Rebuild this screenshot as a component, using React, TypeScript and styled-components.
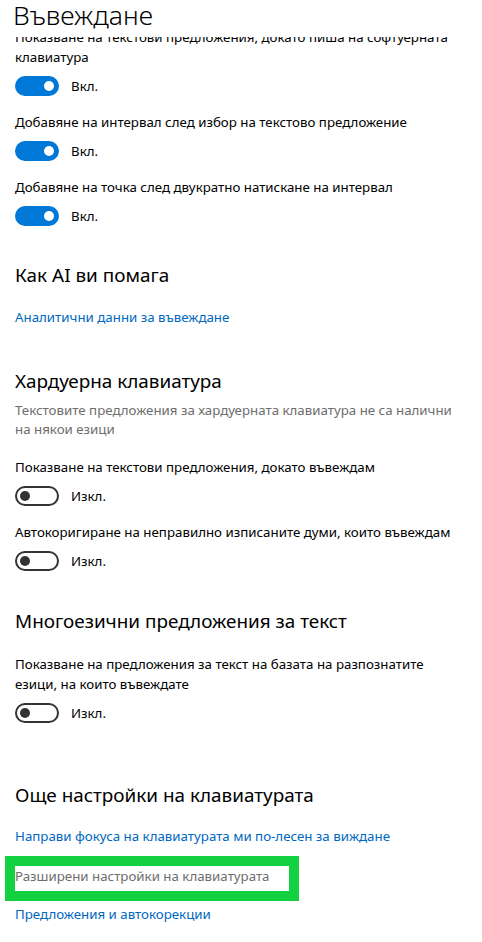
import React from "react";
import styled, { createGlobalStyle } from "styled-components";

const GlobalStyle = createGlobalStyle`
  html, body {
    margin: 0;
    padding: 0;
    background: #ffffff;
  }
  body {
    font-family: "Noto Sans", "Liberation Sans", sans-serif;
    color: #000000;
    -webkit-font-smoothing: antialiased;
  }
`;

const Page = styled.div`
  width: 482px;
  height: 942px;
  overflow: hidden;
  background: #ffffff;
  display: flex;
  flex-direction: column;
`;

const Header = styled.header`
  position: relative;
  z-index: 1;
  box-sizing: border-box;
  height: 37px;
  flex: 0 0 37px;
  background: #ffffff;
  padding: 3px 0 0 13px;
`;

const Title = styled.h1`
  margin: 0;
  font-size: 26.5px;
  line-height: 24px;
  font-weight: 300;
  color: #000000;
`;

const Content = styled.main`
  margin-top: -10px;
  padding: 0 15px;
  display: flex;
  flex-direction: column;
`;

const Section = styled.section<{ $top: number }>`
  margin-top: ${(p) => p.$top}px;
  display: flex;
  flex-direction: column;
`;

const Heading = styled.h2`
  margin: 0;
  font-size: 18.9px;
  line-height: 28px;
  font-weight: 400;
  color: #000000;
`;

const Description = styled.p`
  margin: 6px 0 0;
  font-size: 13.3px;
  line-height: 19px;
  color: #6d6d6d;
  white-space: nowrap;
`;

const Setting = styled.div<{ $top: number }>`
  margin-top: ${(p) => p.$top}px;
  display: flex;
  flex-direction: column;
`;

const Label = styled.div`
  font-size: 13.3px;
  line-height: 20px;
  white-space: nowrap;
`;

const ToggleRow = styled.div`
  margin-top: 9px;
  display: flex;
  align-items: center;
  gap: 12px;
  height: 20px;
`;

const Track = styled.span<{ $on: boolean }>`
  box-sizing: border-box;
  width: 44px;
  height: 20px;
  border-radius: 10px;
  display: flex;
  align-items: center;
  justify-content: ${(p) => (p.$on ? "flex-end" : "flex-start")};
  padding: 0 ${(p) => (p.$on ? "5px" : "3px")};
  background: ${(p) => (p.$on ? "#0078d7" : "transparent")};
  border: ${(p) => (p.$on ? "none" : "2px solid #333333")};
`;

const Knob = styled.span<{ $on: boolean }>`
  width: 10px;
  height: 10px;
  border-radius: 50%;
  background: ${(p) => (p.$on ? "#ffffff" : "#333333")};
`;

const State = styled.span`
  font-size: 13.3px;
  line-height: 20px;
`;

const Link = styled.a<{ $top: number; $muted?: boolean }>`
  margin-top: ${(p) => p.$top}px;
  display: block;
  font-size: 13.3px;
  line-height: 20px;
  color: ${(p) => (p.$muted ? "#6d6d6d" : "#0067c0")};
  text-decoration: none;
  white-space: nowrap;
`;

const Highlight = styled.div<{ $top: number }>`
  margin-top: ${(p) => p.$top}px;
  width: 274px;
  height: 25px;
  outline: 10px solid #13d141;
`;

function Toggle({ on }: { on: boolean }) {
  return (
    <ToggleRow>
      <Track $on={on}>
        <Knob $on={on} />
      </Track>
      <State>{on ? "Вкл." : "Изкл."}</State>
    </ToggleRow>
  );
}

export default function App() {
  return (
    <Page>
      <GlobalStyle />
      <Header>
        <Title>Въвеждане</Title>
      </Header>
      <Content>
        <Setting $top={0}>
          <Label>
            Показване на текстови предложения, докато пиша на софтуерната
            <br />
            клавиатура
          </Label>
          <Toggle on />
        </Setting>
        <Setting $top={16}>
          <Label>Добавяне на интервал след избор на текстово предложение</Label>
          <Toggle on />
        </Setting>
        <Setting $top={16}>
          <Label>Добавяне на точка след двукратно натискане на интервал</Label>
          <Toggle on />
        </Setting>

        <Section $top={35}>
          <Heading>Как AI ви помага</Heading>
          <Link href="#" $top={18}>
            Аналитични данни за въвеждане
          </Link>
        </Section>

        <Section $top={40}>
          <Heading>Хардуерна клавиатура</Heading>
          <Description>
            Текстовите предложения за хардуерната клавиатура не са налични
            <br />
            на някои езици
          </Description>
          <Setting $top={18}>
            <Label>Показване на текстови предложения, докато въвеждам</Label>
            <Toggle on={false} />
          </Setting>
          <Setting $top={16}>
            <Label>Автокоригиране на неправилно изписаните думи, които въвеждам</Label>
            <Toggle on={false} />
          </Setting>
        </Section>

        <Section $top={36}>
          <Heading>Многоезични предложения за текст</Heading>
          <Setting $top={19}>
            <Label>
              Показване на предложения за текст на базата на разпознатите
              <br />
              езици, на които въвеждате
            </Label>
            <Toggle on={false} />
          </Setting>
        </Section>

        <Section $top={58}>
          <Heading>Още настройки на клавиатурата</Heading>
          <Link href="#" $top={17}>
            Направи фокуса на клавиатурата ми по-лесен за виждане
          </Link>
          <Highlight $top={20}>
            <Link href="#" $top={0} $muted>
              Разширени настройки на клавиатурата
            </Link>
          </Highlight>
          <Link href="#" $top={13}>
            Предложения и автокорекции
          </Link>
        </Section>
      </Content>
    </Page>
  );
}
